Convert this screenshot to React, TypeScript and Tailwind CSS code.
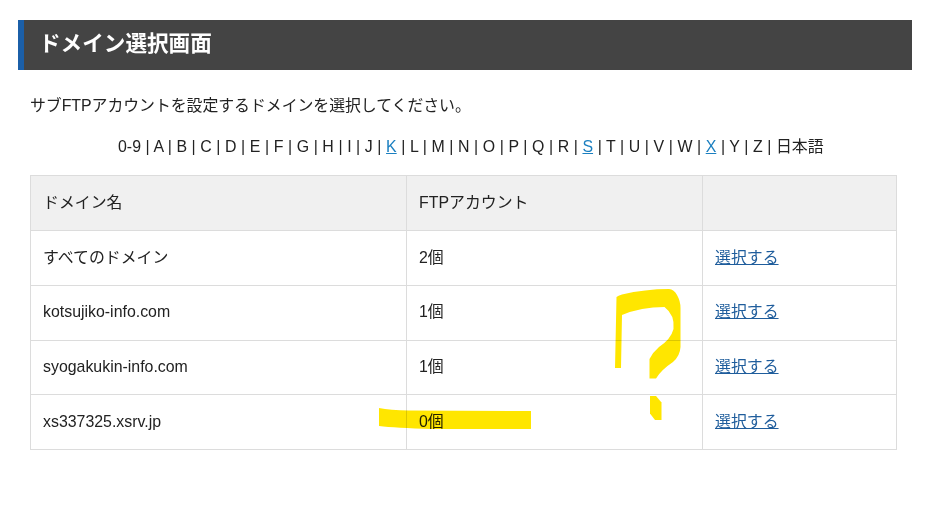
const letters = ['0-9', ...'ABCDEFGHIJKLMNOPQRSTUVWXYZ'.split(''), '日本語'];
const linked = ['K', 'S', 'X'];

const rows = [
  { name: 'すべてのドメイン', count: '2個', h: 'h-[55px]' },
  { name: 'kotsujiko-info.com', count: '1個', h: 'h-[55px] *:pb-[2px]' },
  { name: 'syogakukin-info.com', count: '1個', h: 'h-[54px] *:pb-[2px]' },
  { name: 'xs337325.xsrv.jp', count: '0個', h: 'h-[55px]' },
];

const cell = 'flex items-center border-b border-r border-[#dcdcdc] pl-3';
const cols = 'grid grid-cols-[376px_296px_194px]';

function Marker() {
  return (
    <svg className="pointer-events-none absolute left-0 top-0 mix-blend-multiply" width="928" height="513" viewBox="0 0 928 513" fill="#ffe600">
      <path d="M616.5 297 Q618 295.500 622 294.500 Q645 289 669 289 Q674 289.500 677 295 Q680.500 301 680.500 308 V347 Q680 356 673 362 Q661 370 656 378.500 H649.500 V359 Q653 352 659 347 Q671 339 673.500 329 Q675 315 664.500 307 Q641 307 622 315 L621 368 H615 Z" />
      <path d="M650 396 H656 L661.500 402.500 V420 H655 L650 413.500 Z" />
      <path d="M379 408 Q390 410 409 410.500 L531 411 V429 H432 Q395 428 379 426 Z" />
    </svg>
  );
}

export default function App() {
  return (
    <div className="relative h-[513px] w-[928px] overflow-hidden bg-white pl-[18px] pt-5 font-['Liberation_Sans','Noto_Sans_CJK_JP',sans-serif] text-[15.9px] text-[#222]">
      <h1 className="flex h-[50px] w-[894px] items-center border-l-[6px] border-[#1b5fa8] bg-[#444] pb-px pl-[15px] text-[21.6px] font-bold text-white">
        ドメイン選択画面
      </h1>
      <main className="ml-3 w-[867px]">
        <p className="mt-6 h-6 leading-6 tracking-[-0.05px]">サブFTPアカウントを設定するドメインを選択してください。</p>
        <nav className="mt-[17px] h-10 whitespace-nowrap pl-[88px] leading-6 [word-spacing:0.16px]">
          {letters.map((l, i) => (
            <span key={l}>
              {i > 0 && ' | '}
              {linked.includes(l) ? <a href="#" className="text-[#1a7fc0] underline underline-offset-1">{l}</a> : l}
            </span>
          ))}
        </nav>
        <div className="border-l border-t border-[#dcdcdc]">
          <div className={`${cols} h-[55px] bg-[#f0f0f0]`}>
            <div className={cell}>ドメイン名</div>
            <div className={cell}>FTPアカウント</div>
            <div className={cell} />
          </div>
          {rows.map((r) => (
            <div key={r.name} className={`${cols} ${r.h}`}>
              <div className={cell}>{r.name}</div>
              <div className={cell}>{r.count}</div>
              <div className={cell}>
                <a href="#" className="text-[#1f5d9c] underline underline-offset-1">選択する</a>
              </div>
            </div>
          ))}
        </div>
      </main>
      <Marker />
    </div>
  );
}
